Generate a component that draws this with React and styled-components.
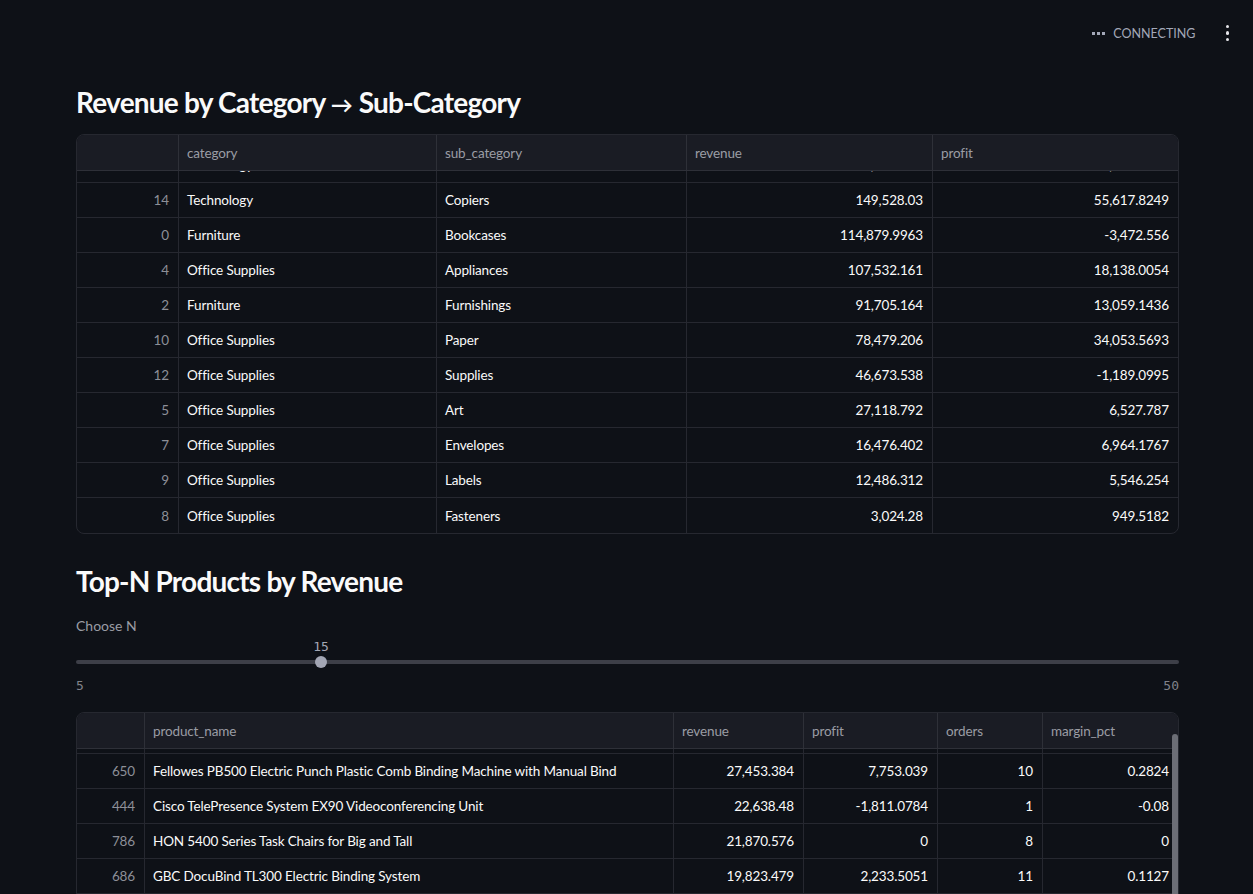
import React, { useLayoutEffect, useRef } from 'react';
import styled, { createGlobalStyle } from 'styled-components';

const GlobalStyle = createGlobalStyle`
  html, body {
    margin: 0;
    padding: 0;
    background: #0e1117;
  }
  body {
    font-family: Lato, "Noto Sans", sans-serif;
    color: #fafafa;
    -webkit-font-smoothing: antialiased;
  }
`;

// Верхня панель зі статусом
const TopBar = styled.header`
  height: 66px;
  display: flex;
  align-items: center;
  justify-content: flex-end;
  padding-right: 24px;
  gap: 30px;
`;

const Status = styled.div`
  display: flex;
  align-items: center;
  gap: 8px;
  font-size: 12.5px;
  color: #a3a8b8;
  text-transform: uppercase;
`;

const Dots = styled.span`
  display: inline-flex;
  gap: 2px;

  i {
    width: 3px;
    height: 3px;
    background: #a3a8b8;
  }
`;

const MenuButton = styled.button`
  background: none;
  border: 0;
  padding: 0;
  display: flex;
  flex-direction: column;
  gap: 3px;
  cursor: pointer;

  i {
    width: 3.5px;
    height: 3.5px;
    border-radius: 50%;
    background: #e6e6ea;
  }
`;

const Main = styled.main`
  padding: 0 74px 0 76px;
`;

const Heading = styled.h2`
  margin: ${p => p.$top}px 0 0;
  height: 34px;
  font-size: 28px;
  line-height: 34px;
  font-weight: 700;
  color: #fafafa;
  letter-spacing: -0.028em;
`;

const Arrow = styled.span`
  font-size: 22px;
  line-height: 1;
  letter-spacing: 0;
`;

// Таблиця даних
const Grid = styled.div`
  position: relative;
  margin-top: ${p => p.$top}px;
  border: 1px solid #262830;
  border-radius: 8px;
  overflow: hidden;
  font-size: 13.5px;
  letter-spacing: -0.01em;
`;

const Row = styled.div`
  display: grid;
  grid-template-columns: ${p => p.$cols};
  height: 35px;
  border-bottom: 1px solid #262830;
  box-sizing: border-box;

  &:last-child {
    border-bottom: 0;
  }
`;

const HeaderRow = styled(Row)`
  height: 36px;
  background: #1a1c24;
  border-bottom: 1px solid #2e3038;
`;

const Cell = styled.div`
  display: flex;
  align-items: center;
  justify-content: ${p => (p.$num ? 'flex-end' : 'flex-start')};
  padding: 0 ${p => (p.$num ? 9 : 8)}px;
  border-right: 1px solid #262830;
  white-space: nowrap;
  overflow: hidden;
  color: ${p => (p.$index ? '#8d8f97' : '#fafafa')};

  &:last-child {
    border-right: 0;
  }
`;

const HeadCell = styled(Cell)`
  color: #9a9ca4;
  border-right-color: #2e3038;
`;

const Body = styled.div`
  height: ${p => p.$height}px;
  overflow: hidden;
`;

const ScrollThumb = styled.div`
  position: absolute;
  right: 0;
  top: 21px;
  width: 6px;
  height: 300px;
  border-radius: 3px;
  background: #6c6e76;
`;

// Слайдер
const Label = styled.div`
  margin-top: 18px;
  font-size: 14px;
  line-height: 20px;
  color: #9a9ca4;
`;

const Slider = styled.div`
  position: relative;
  height: 62px;
  font-family: "DejaVu Sans Mono", "Liberation Mono", monospace;
  font-size: 13px;
  color: #9a9ca4;
`;

const Track = styled.div`
  position: absolute;
  left: 0;
  right: 0;
  top: 24px;
  height: 4px;
  border-radius: 2px;
  background: #3d3f48;
`;

const Thumb = styled.div`
  position: absolute;
  top: 20px;
  width: 12px;
  height: 12px;
  margin-left: -6px;
  border-radius: 50%;
  background: #a3a6b4;
`;

const ThumbValue = styled.div`
  position: absolute;
  top: 1px;
  transform: translateX(-50%);
  line-height: 20px;
  color: #a3a6b4;
`;

const Ends = styled.div`
  position: absolute;
  left: 0;
  right: 0;
  top: 40px;
  display: flex;
  justify-content: space-between;
  line-height: 20px;
  color: #808289;
`;

const catCols = '102px 258px 250px 246px 1fr';
const catData = [
  [16, 'Technology', 'Phones', '330,007.054', '44,515.7306'],
  [1, 'Furniture', 'Chairs', '328,449.103', '26,590.1663'],
  [11, 'Office Supplies', 'Storage', '223,843.608', '21,278.8264'],
  [3, 'Furniture', 'Tables', '206,965.532', '-17,725.4811'],
  [6, 'Office Supplies', 'Binders', '203,412.733', '30,221.7633'],
  [15, 'Technology', 'Machines', '189,238.631', '3,384.7569'],
  [13, 'Technology', 'Accessories', '167,380.318', '41,936.6357'],
  [14, 'Technology', 'Copiers', '149,528.03', '55,617.8249'],
  [0, 'Furniture', 'Bookcases', '114,879.9963', '-3,472.556'],
  [4, 'Office Supplies', 'Appliances', '107,532.161', '18,138.0054'],
  [2, 'Furniture', 'Furnishings', '91,705.164', '13,059.1436'],
  [10, 'Office Supplies', 'Paper', '78,479.206', '34,053.5693'],
  [12, 'Office Supplies', 'Supplies', '46,673.538', '-1,189.0995'],
  [5, 'Office Supplies', 'Art', '27,118.792', '6,527.787'],
  [7, 'Office Supplies', 'Envelopes', '16,476.402', '6,964.1767'],
  [9, 'Office Supplies', 'Labels', '12,486.312', '5,546.254'],
  [8, 'Office Supplies', 'Fasteners', '3,024.28', '949.5182'],
];

const prodCols = '68px 529px 130px 134px 105px 1fr';
const prodData = [
  [404, 'Canon imageCLASS 2200 Advanced Copier', '61,599.824', '25,199.928', '5', '0.4091'],
  [650, 'Fellowes PB500 Electric Punch Plastic Comb Binding Machine with Manual Bind', '27,453.384', '7,753.039', '10', '0.2824'],
  [444, 'Cisco TelePresence System EX90 Videoconferencing Unit', '22,638.48', '-1,811.0784', '1', '-0.08'],
  [786, 'HON 5400 Series Task Chairs for Big and Tall', '21,870.576', '0', '8', '0'],
  [686, 'GBC DocuBind TL300 Electric Binding System', '19,823.479', '2,233.5051', '11', '0.1127'],
  [687, 'GBC Ibimaster 500 Manual ProClick Binding System', '19,024.5', '760.98', '9', '0.04'],
  [797, 'Hewlett Packard LaserJet 3310 Copier', '18,839.686', '6,983.8836', '8', '0.3707'],
  [861, 'HP Designjet T520 Inkjet Large Format Printer - 24" Color', '18,374.895', '4,094.9766', '3', '0.2229'],
  [685, 'GBC DocuBind P400 Electric Binding System', '17,965.068', '-1,878.1662', '6', '-0.1045'],
  [772, 'High Speed Automatic Electric Letter Opener', '17,030.312', '-262.0048', '3', '-0.0154'],
  [1010, 'Lexmark MX611dhe Monochrome Laser Printer', '16,829.901', '-5,269.969', '18', '-0.3131'],
  [1081, 'Martin Yale Chadless Opener Electric Letter Opener', '16,656.2', '-1,299.1836', '7', '-0.078'],
  [1244, 'Riverside Palais Royal Lawyers Bookcase, Royale Cherry Finish', '15,610.966', '1,322.7646', '12', '0.0847'],
  [1197, 'Samsung Galaxy Mega 6.3', '13,943.668', '2,959.5264', '11', '0.2123'],
  [447, 'Chromcraft Bull-Nose Wood Oval Conference Tables & Bases', '12,878.784', '-1,136.8974', '10', '-0.0883'],
];

function DataGrid({ cols, columns, rows, numeric, top, scroll, scrollbar }) {
  const ref = useRef(null);

  useLayoutEffect(() => {
    const el = ref.current;
    if (!el) return;
    el.scrollTop = scroll === 'end' ? el.scrollHeight : scroll;
  }, [scroll]);

  return (
    <Grid $top={top}>
      <HeaderRow $cols={cols}>
        <HeadCell />
        {columns.map(c => (
          <HeadCell key={c}>{c}</HeadCell>
        ))}
      </HeaderRow>
      <Body ref={ref} $height={362}>
        {rows.map(r => (
          <Row key={r[0]} $cols={cols}>
            <Cell $num $index>{r[0]}</Cell>
            {r.slice(1).map((v, i) => (
              <Cell key={i} $num={numeric[i]}>{v}</Cell>
            ))}
          </Row>
        ))}
      </Body>
      {scrollbar && <ScrollThumb />}
    </Grid>
  );
}

export default function App() {
  const n = 15;
  const pct = ((n - 5) / (50 - 5)) * 100;

  return (
    <>
      <GlobalStyle />
      <TopBar>
        <Status>
          <Dots><i /><i /><i /></Dots>
          Connecting
        </Status>
        <MenuButton aria-label="Main menu">
          <i /><i /><i />
        </MenuButton>
      </TopBar>
      <Main>
        <Heading $top={19}>
          Revenue by Category <Arrow>→</Arrow> Sub-Category
        </Heading>
        <DataGrid
          top={15}
          cols={catCols}
          columns={['category', 'sub_category', 'revenue', 'profit']}
          numeric={[false, false, true, true]}
          rows={catData}
          scroll="end"
        />

        <Heading $top={30}>Top-N Products by Revenue</Heading>
        <Label>Choose N</Label>
        <Slider>
          <Track />
          <ThumbValue style={{ left: `${pct}%` }}>{n}</ThumbValue>
          <Thumb style={{ left: `${pct}%` }} />
          <Ends>
            <span>5</span>
            <span>50</span>
          </Ends>
        </Slider>
        <DataGrid
          top={14}
          cols={prodCols}
          columns={['product_name', 'revenue', 'profit', 'orders', 'margin_pct']}
          numeric={[false, true, true, true, true]}
          rows={prodData}
          scroll={30}
          scrollbar
        />
        <div style={{ height: 60 }} />
      </Main>
    </>
  );
}
